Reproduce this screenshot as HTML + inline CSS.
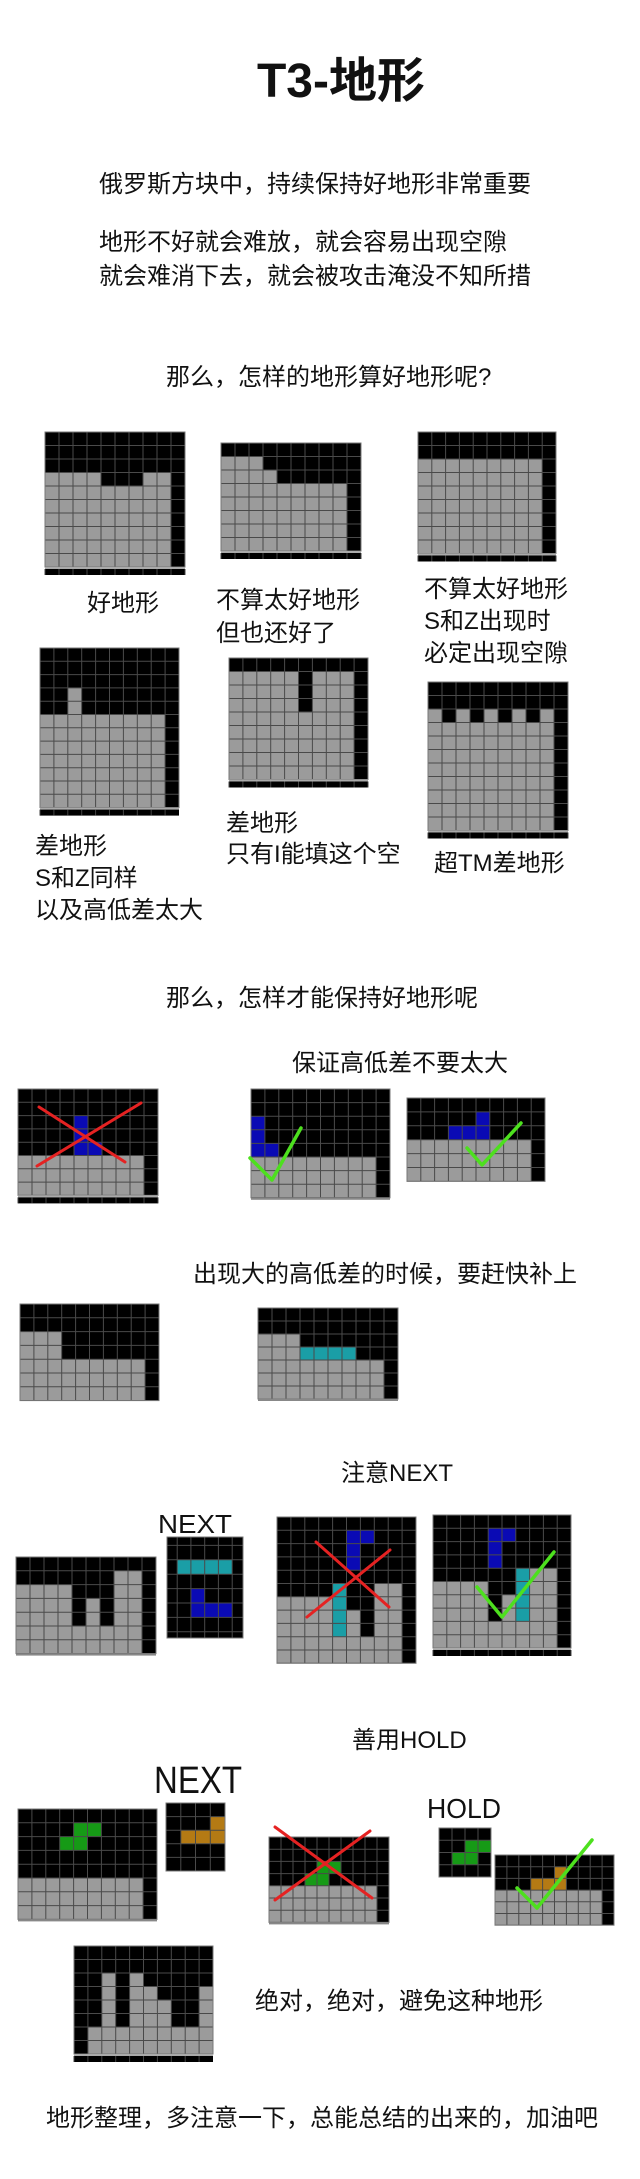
<!DOCTYPE html>
<html><head><meta charset="utf-8">
<style>
html,body{margin:0;padding:0;background:#fff;}
body{width:640px;height:2179px;position:relative;overflow:hidden;}
svg{position:absolute;left:0;top:0;}
text{font-family:"Liberation Sans","Noto Sans CJK SC",sans-serif;fill:#111;}
</style></head><body>
<svg id="s" width="640" height="2179" viewBox="0 0 640 2179" xmlns="http://www.w3.org/2000/svg">
<g id="boards"></g>
<g font-size="24">
<text x="341" y="97" font-size="48" font-weight="bold" text-anchor="middle" style="font-family:'Liberation Sans','Noto Sans CJK SC',sans-serif">T3-地形</text>
<text x="99" y="192">俄罗斯方块中，持续保持好地形非常重要</text>
<text x="99" y="250">地形不好就会难放，就会容易出现空隙</text>
<text x="99" y="284">就会难消下去，就会被攻击淹没不知所措</text>
<text x="166" y="385">那么，怎样的地形算好地形呢?</text>
<text x="87" y="611">好地形</text>
<text x="216" y="608">不算太好地形</text>
<text x="216" y="641">但也还好了</text>
<text x="424" y="597">不算太好地形</text>
<text x="424" y="629">S和Z出现时</text>
<text x="424" y="661">必定出现空隙</text>
<text x="35" y="854">差地形</text>
<text x="35" y="886">S和Z同样</text>
<text x="35" y="918">以及高低差太大</text>
<text x="226" y="831">差地形</text>
<text x="226" y="862">只有I能填这个空</text>
<text x="434" y="871">超TM差地形</text>
<text x="166" y="1006">那么，怎样才能保持好地形呢</text>
<text x="292" y="1071">保证高低差不要太大</text>
<text x="193" y="1282">出现大的高低差的时候，要赶快补上</text>
<text x="341" y="1481">注意NEXT</text>
<text x="352" y="1748">善用HOLD</text>
<text x="255" y="2009">绝对，绝对，避免这种地形</text>
<text x="46" y="2126">地形整理，多注意一下，总能总结的出来的，加油吧</text>
</g>
<g style="font-family:'Liberation Sans',sans-serif" fill="#000">
<text x="158" y="1533" font-size="26" textLength="74" lengthAdjust="spacingAndGlyphs">NEXT</text>
<text x="154" y="1793" font-size="38" textLength="88" lengthAdjust="spacingAndGlyphs">NEXT</text>
<text x="427" y="1818" font-size="28" textLength="74" lengthAdjust="spacingAndGlyphs">HOLD</text>
</g>
<g id="marks" fill="none" stroke-linecap="round" stroke-linejoin="round"></g>
</svg>
<script>
var C={'.':'#000','g':'#9b9b9b','b':'#0a0ab4','c':'#1a9ea6','G':'#169a16','o':'#b47a14'};
var out='';
function board(x,y,w,nrows,ch,rows,o){
  o=o||{};
  var cols=o.cols||10, cw=o.cw||(w/cols), gx=o.gx!=null?o.gx:x, gy=o.gy!=null?o.gy:y;
  var h=o.h||nrows*ch;
  var id='c'+Math.round(x)+'_'+Math.round(y);
  out+='<clipPath id="'+id+'"><rect x="'+x+'" y="'+y+'" width="'+w+'" height="'+h+'"/></clipPath>';
  out+='<g clip-path="url(#'+id+')"><rect x="'+x+'" y="'+y+'" width="'+w+'" height="'+h+'" fill="#000"/>';
  for(var r=0;r<rows.length;r++){var s=rows[r];for(var c=0;c<s.length;c++){var k=s[c];if(k!='.'&&C[k]){out+='<rect x="'+(gx+c*cw)+'" y="'+(gy+r*ch)+'" width="'+cw+'" height="'+ch+'" fill="'+C[k]+'"/>';}}}
  var p='';
  for(var xx=gx;xx<=x+w+0.5;xx+=cw){if(xx>=x-0.5)p+='M'+xx.toFixed(1)+' '+y+'V'+(y+h);}
  for(var yy=gy;yy<=y+h+0.5;yy+=ch){if(yy>=y-0.5)p+='M'+x+' '+yy.toFixed(1)+'H'+(x+w);}
  out+='<path d="'+p+'" stroke="#4a4a4a" stroke-width="1" fill="none"/></g>';
  out+='<rect x="'+x+'" y="'+y+'" width="'+w+'" height="'+h+'" fill="none" stroke="#777" stroke-width="1"/>';
  if(o.strip){
    var sy=y+h;
    out+='<rect x="'+x+'" y="'+sy+'" width="'+w+'" height="2" fill="#aaa"/>';
    out+='<rect x="'+x+'" y="'+(sy+2)+'" width="'+w+'" height="6" fill="#000"/>';
    var q='';for(var xx2=x;xx2<=x+w;xx2+=cw)q+='M'+xx2.toFixed(1)+' '+(sy+2)+'V'+(sy+8);
    out+='<path d="'+q+'" stroke="#444" stroke-width="1"/>';
  }
  if(o.line){out+='<rect x="'+x+'" y="'+(y+h)+'" width="'+w+'" height="2" fill="#888"/>';}
}
function rep(s,n){var a=[];for(var i=0;i<n;i++)a.push(s);return a;}
var G9='ggggggggg.';
// row 1
board(45,432,140,10,13.5,[].concat(rep('..........',3),['gggg...gg.'],rep(G9,6)),{strip:1});
board(221,443,140,8,13.5,['..........','ggg.......','gggg......'].concat(rep(G9,5)),{strip:1});
board(418,432,138,9,13.5,rep('..........',2).concat(rep(G9,7)),{strip:1});
// row 2
board(40,648,139,12,13.3,rep('..........',3).concat(rep('..g.......',2),rep(G9,7)),{strip:1});
board(229,658,139,9,13.5,['..........'].concat(rep('ggggg.ggg.',3),rep(G9,5)),{strip:1});
board(428,682,140,11,13.5,rep('..........',2).concat(['g.g.g.g.g.'],rep(G9,8)),{strip:1});
// keep height diff
board(18,1089,140,8,13.3,['..........','..........','....b.....','....b.....','....bb....'].concat(rep(G9,3)),{strip:1});
board(251,1089,139,8,13.6,['..........','..........','b.........','b.........','bb........'].concat(rep(G9,3)),{line:1});
board(407,1098,138,6,13.9,['..........','.....b....','...bbb....'].concat(rep(G9,3)),{});
// fill quickly
board(20,1304,139,7,13.8,['..........','..........','ggg.......','ggg.......'].concat(rep(G9,3)),{});
board(258,1308,140,7,13,['..........','..........','ggg.......','gggcccc...'].concat(rep(G9,3)),{line:1});
// NEXT
board(16,1557,140,7,13.8,['..........','.......gg.','gggg...gg.','gggg.g.gg.','gggg.g.gg.',G9,G9],{line:1});
board(167,1537,76,7,14.4,['.....','.....','.cccc','.....','..b..','..bbb','.....'],{cols:5,cw:13.75,gx:163.4,gy:1531,h:101});
board(277,1517,139,11,13.3,['..........','.....bb...','.....b....','.....b....','..........','....c..gg.','ggggc..gg.','ggggcg.gg.','ggggcg.gg.',G9,G9],{});
board(433,1515,138,10,13.3,['..........','....bb....','....b.....','....b.....','......cgg.','gggg..cgg.','gggg.gcgg.','gggg.gcgg.',G9,G9],{strip:1});
// HOLD
board(18,1809,139,8,13.8,['..........','....GG....','...GG.....','..........','..........'].concat(rep(G9,3)),{line:1});
board(166,1803,59,5,13.6,['....','...o','.ooo','....','....'],{cols:4,cw:14.75});
board(269,1837,120,7,12.2,['..........','..........','....GG....','...GG.....',G9,G9,G9],{cw:12,line:1});
board(439,1828,52,4,12.25,['....','..GG','.GG.','....'],{cols:4,cw:13});
board(495,1855,119,6,11.7,['..........','.....o....','...ooo....',G9,G9,G9],{cw:11.9});
// avoid
board(74,1946,139,8,13.5,['..........','..........','..g.g.....','..g.gg...g','..g.ggg..g','..g.ggg..g','.ggggggggg','.ggggggggg'],{strip:1});
document.getElementById('boards').innerHTML=out;
var m='';
function X(a,b,c,d,e,f,g,h){m+='<path d="M'+a+' '+b+'L'+c+' '+d+'M'+e+' '+f+'L'+g+' '+h+'" stroke="#e52222" stroke-width="3"/>';}
function V(a,b,c,d,e,f){m+='<path d="M'+a+' '+b+'L'+c+' '+d+'L'+e+' '+f+'" stroke="#4de01e" stroke-width="3.5"/>';}
X(39,1107,125,1162,37,1166,141,1103);
V(250,1158,272,1180,301,1128);
V(467,1148,482,1165,521,1123);
X(316,1542,389,1607,307,1617,390,1550);
V(477,1587,502,1617,554,1552);
X(275,1827,372,1898,275,1900,370,1831);
V(517,1888,537,1908,592,1840);
document.getElementById('marks').innerHTML=m;
</script>
</body></html>
